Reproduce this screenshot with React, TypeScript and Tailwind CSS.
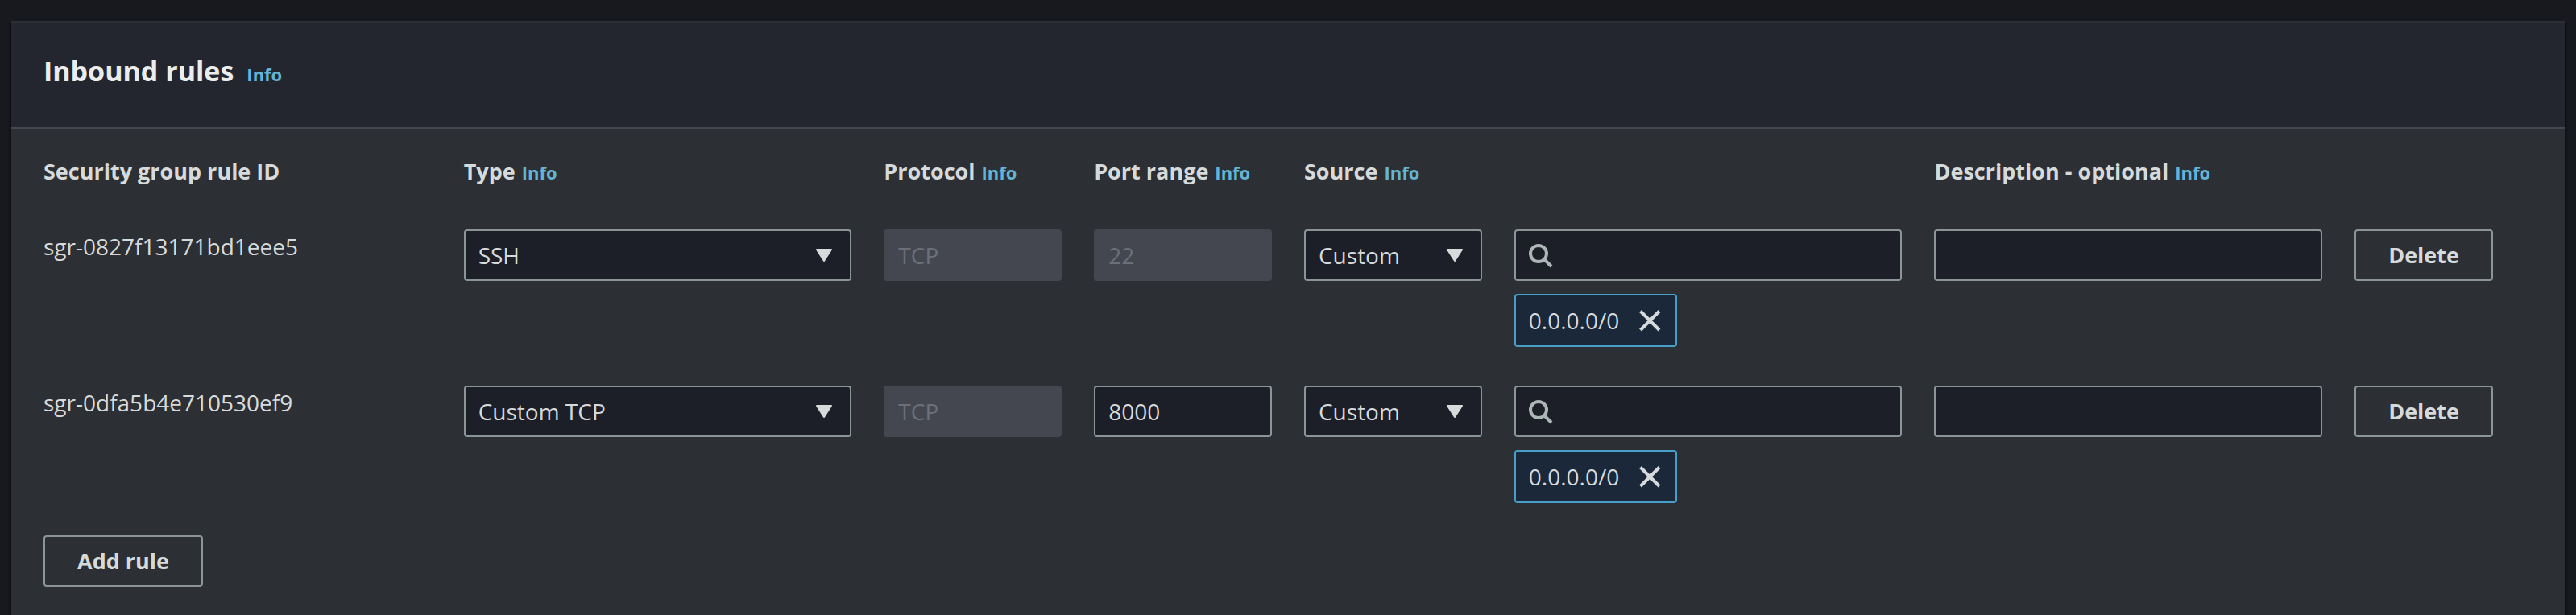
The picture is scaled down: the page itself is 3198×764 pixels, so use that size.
import { useState } from "react";

type Rule = {
  id: string;
  type: string;
  protocol: string;
  port: string;
  portEditable: boolean;
  source: string;
  cidr: string;
};

const RULES: Rule[] = [
  { id: "sgr-0827f13171bd1eee5", type: "SSH", protocol: "TCP", port: "22", portEditable: false, source: "Custom", cidr: "0.0.0.0/0" },
  { id: "sgr-0dfa5b4e710530ef9", type: "Custom TCP", protocol: "TCP", port: "8000", portEditable: true, source: "Custom", cidr: "0.0.0.0/0" },
];

const FIELD =
  "block h-16 w-full rounded-sm border-2 border-[#8a9696] bg-[#1c1f28] px-4 text-[28px] text-[#d6dada] outline-none disabled:border-[#444750] disabled:bg-[#444750] disabled:text-[#6b6f78] disabled:opacity-100";

const BUTTON =
  "h-16 rounded-sm border-2 border-[#8a9696] px-10 text-[27px] font-bold text-[#d6dada]";

function InfoLink() {
  return (
    <a href="#info" className="text-[22px] font-bold text-[#64b5d4]">
      Info
    </a>
  );
}

function ColumnHeader({ id, label, span, info = true }: { id: string; label: string; span: string; info?: boolean }) {
  return (
    <div className={`flex items-baseline gap-2 text-[27px] leading-[42px] font-bold whitespace-nowrap ${span}`}>
      <span id={id}>{label}</span>
      {info && <InfoLink />}
    </div>
  );
}

function SelectField({ value, options, labelledBy }: { value: string; options: string[]; labelledBy: string }) {
  const [current, setCurrent] = useState(value);
  return (
    <div className="relative">
      <select
        aria-labelledby={labelledBy}
        value={current}
        onChange={(e) => setCurrent(e.target.value)}
        className={`appearance-none ${FIELD}`}
      >
        {options.map((o) => (
          <option key={o}>{o}</option>
        ))}
      </select>
      <svg viewBox="0 0 32 32" className="pointer-events-none absolute top-4 right-[18px] size-8" aria-hidden="true">
        <path d="M7 9h18l-9 14z" fill="#d6dada" stroke="#d6dada" strokeWidth="2" strokeLinejoin="round" />
      </svg>
    </div>
  );
}

function RuleRow({ rule }: { rule: Rule }) {
  const [port, setPort] = useState(rule.port);
  return (
    <div className="grid grid-cols-12 items-start gap-x-10">
      <div className="col-span-2 text-[28px] leading-[42px]">{rule.id}</div>
      <div className="col-span-2">
        <SelectField value={rule.type} options={["SSH", "Custom TCP", "HTTP", "HTTPS"]} labelledBy="col-type" />
      </div>
      <input aria-labelledby="col-protocol" type="text" disabled value={rule.protocol} readOnly className={FIELD} />
      <input
        aria-labelledby="col-port"
        type="text"
        disabled={!rule.portEditable}
        value={port}
        onChange={(e) => setPort(e.target.value)}
        className={FIELD}
      />
      <SelectField value={rule.source} options={["Custom", "Anywhere", "My IP"]} labelledBy="col-source" />
      <div className="col-span-2 flex flex-col items-start gap-4">
        <div className="relative w-full">
          <svg viewBox="0 0 32 32" fill="none" stroke="#adb6b6" strokeWidth="4" className="pointer-events-none absolute top-4 left-4 size-8" aria-hidden="true">
            <circle cx="14" cy="14" r="10" />
            <path d="M21 21l9 9" />
          </svg>
          <input aria-labelledby="col-source" type="text" className={`pl-14 ${FIELD}`} />
        </div>
        <div className="flex h-[66px] items-center gap-[22px] rounded-sm border-2 border-[#479fc9] bg-[#1a283a] px-4 text-[28px]">
          <span>{rule.cidr}</span>
          <button type="button" aria-label={`Remove ${rule.cidr}`}>
            <svg viewBox="0 0 32 32" stroke="#d6dada" strokeWidth="4" className="size-8" aria-hidden="true">
              <path d="M4.5 4.5l23.5 23.5M28 4.5l-23.5 23.5" />
            </svg>
          </button>
        </div>
      </div>
      <div className="col-span-2">
        <input aria-labelledby="col-description" type="text" className={FIELD} />
      </div>
      <div>
        <button type="button" className={BUTTON}>
          Delete
        </button>
      </div>
    </div>
  );
}

export default function App() {
  return (
    <div className="flex min-h-screen flex-col bg-[#18191e] pt-[26px] pr-3.5 pl-3.5 font-['Open_Sans','Noto_Sans',sans-serif] text-[#d6dada]">
      <section className="grow border-t-2 border-[#2c3034] bg-[#2c2f33] shadow-[0_2px_2px_0_rgba(0,0,0,0.3),2px_2px_2px_0_rgba(0,0,0,0.3),-2px_2px_2px_0_rgba(0,0,0,0.3)]">
        <header className="flex items-baseline gap-4 border-b-2 border-[#444750] bg-[#23262e] px-10 pt-[37px] pb-[43px] leading-[46px]">
          <h2 className="text-[34px] leading-[46px] font-bold text-[#ebeded]">Inbound rules</h2>
          <InfoLink />
        </header>
        <div className="px-10 pt-8 pb-10">
          <div className="mb-[50px] grid grid-cols-12 gap-x-10">
            <ColumnHeader id="col-id" label="Security group rule ID" span="col-span-2" info={false} />
            <ColumnHeader id="col-type" label="Type" span="col-span-2" />
            <ColumnHeader id="col-protocol" label="Protocol" span="col-span-1" />
            <ColumnHeader id="col-port" label="Port range" span="col-span-1" />
            <ColumnHeader id="col-source" label="Source" span="col-span-3" />
            <ColumnHeader id="col-description" label="Description - optional" span="col-span-3" />
          </div>
          <div className="flex flex-col gap-12">
            {RULES.map((rule) => (
              <RuleRow key={rule.id} rule={rule} />
            ))}
          </div>
          <button type="button" className={`mt-10 ${BUTTON}`}>
            Add rule
          </button>
        </div>
      </section>
    </div>
  );
}
